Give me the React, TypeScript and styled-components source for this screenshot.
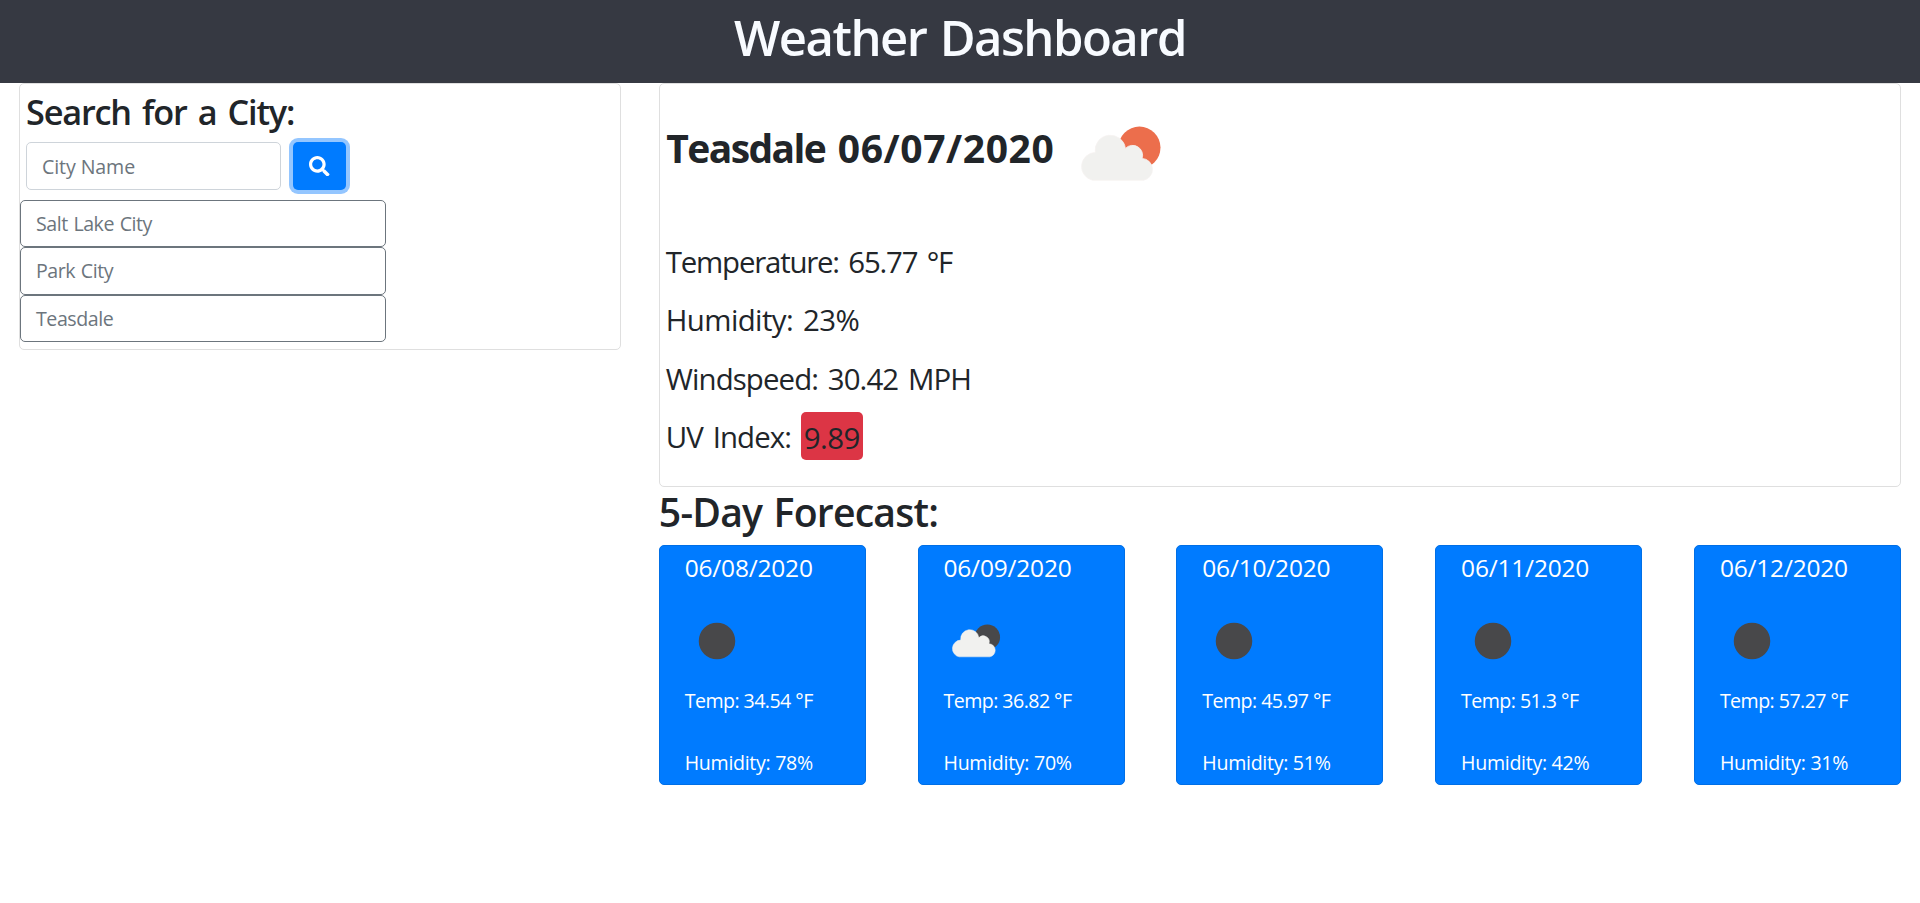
import React from "react";
import styled, { createGlobalStyle } from "styled-components";

const GlobalStyle = createGlobalStyle`
  * { box-sizing: border-box; }
  body { margin: 0; background: #fff; color: #212529; font-family: "Open Sans", "Noto Sans", sans-serif; font-size: 19.6px; }
  h1, h2, h3, p { margin: 0; }
`;

const Header = styled.header`
  height: 83px; padding-top: 7px; background: #363942; color: #f8fbff; text-align: center;
`;
const Title = styled.h1`
  font-size: 49px; line-height: 60px; font-weight: 600; letter-spacing: -1.5px; word-spacing: 2px;
`;
const Layout = styled.main`
  display: grid; grid-template-columns: 602px 1242.2px; column-gap: 37.8px; padding: 0 19px; align-items: start;
`;
const Panel = styled.section<{ $height: number }>`
  height: ${(p) => p.$height}px; border: 1px solid #dfdfdf; border-radius: 5px;
`;
const SearchTitle = styled.h2`
  margin: 7px 0 9px 6px; font-size: 34.3px; line-height: 42px; font-weight: 600;
  letter-spacing: -1.2px; word-spacing: 3.4px; white-space: nowrap;
`;
const SearchForm = styled.form`
  display: flex; gap: 12px; margin: 0 0 9.5px 6px;
`;
const CityInput = styled.input`
  width: 255px; height: 48px; padding: 0 15px; border: 1px solid #ced4da; border-radius: 5px;
  font: inherit; letter-spacing: -0.1px; outline: 0;
  &::placeholder { color: #6c757d; opacity: 1; }
`;
const SearchButton = styled.button`
  display: flex; align-items: center; justify-content: center; width: 53px; height: 48px; padding: 0;
  border: 0; border-radius: 5px; background: #007bff; color: #fff; box-shadow: 0 0 0 4px #94c6ff;
`;
const History = styled.div`
  display: flex; flex-direction: column; width: 366px;
`;
const HistoryButton = styled.button`
  height: 47.5px; padding: 0 15px; border: 1px solid #6c757d; border-radius: 5px; background: #fff;
  color: #6c757d; font: inherit; letter-spacing: -0.45px; word-spacing: 1px; text-align: left;
`;
const CurrentHead = styled.div`
  display: flex; height: 126px; padding-left: 6.5px; align-items: center;
`;
const CityName = styled.h2`
  width: 372px; margin-top: 2px; font-size: 39px; line-height: 48px; font-weight: 700;
  letter-spacing: -1.6px; word-spacing: 4px; white-space: nowrap;
`;
const CityDate = styled.span`
  letter-spacing: 0.6px;
`;
const CurrentIcon = styled.svg`
  width: 106px; height: 106px; margin: 13px 0 0 28px; flex: none;
`;
const Stats = styled.div`
  display: flex; flex-direction: column; gap: 13.4px; padding: 30px 0 0 6px;
`;
const Stat = styled.p<{ $tracking: number }>`
  display: flex; align-items: center; height: 45px; font-size: 29.4px; line-height: 45px; font-weight: 400;
  letter-spacing: ${(p) => p.$tracking}px; word-spacing: 3px; white-space: pre;
`;
const UvBadge = styled.span`
  width: 62px; height: 48px; margin-bottom: 4px; border-radius: 5px; background: #dc3545;
  line-height: 52px; letter-spacing: -0.5px; text-align: center;
`;
const ForecastTitle = styled.h2`
  padding-top: 1px; margin-bottom: 9px; font-size: 39.2px; line-height: 48px; font-weight: 600;
  letter-spacing: -0.8px; word-spacing: 2px;
`;
const Forecast = styled.div`
  display: flex; justify-content: space-between;
`;
const DayCard = styled.article`
  width: 207px; height: 240px; padding: 7px 0 0 24.9px; border: 1px solid #006fe6; border-radius: 5px;
  background: #007bff; color: #fff; white-space: nowrap;
`;
const DayDate = styled.h3`
  font-size: 24.5px; line-height: 30px; font-weight: 400; letter-spacing: -0.2px;
`;
const DayIcon = styled.svg`
  display: block; width: 64px; height: 64px; margin: 25.5px 0 13.5px 0;
`;
const DayText = styled.p<{ $tracking: number }>`
  line-height: 30px; letter-spacing: ${(p) => p.$tracking}px;
  & + & { margin-top: 32px; }
`;

const ICON_BOX = "-3.5 -17.5 105.8 105.8";

const FewClouds = ({ sun, halo }: { sun: string; halo: string }) => (
  <>
    <circle cx="69.8" cy="29" r="21" fill={sun} />
    <path
      fill="#f1f1ef"
      stroke={halo}
      strokeWidth="0.8"
      d="M23.2 61.6 A14 14 0 0 1 25.7 33.9 A15 15 0 1 1 55.8 29.8 A10 10 0 0 1 72.5 39.8 A11 11 0 0 1 73.8 61.6 Z"
    />
  </>
);

const days = [
  { date: "06/08/2020", temp: "34.54", humidity: 78, cloudy: false },
  { date: "06/09/2020", temp: "36.82", humidity: 70, cloudy: true },
  { date: "06/10/2020", temp: "45.97", humidity: 51, cloudy: false },
  { date: "06/11/2020", temp: "51.3", humidity: 42, cloudy: false },
  { date: "06/12/2020", temp: "57.27", humidity: 31, cloudy: false },
];

export default function App() {
  return (
    <>
      <GlobalStyle />
      <Header><Title>Weather Dashboard</Title></Header>
      <Layout>
        <Panel $height={267}>
          <SearchTitle>Search for a City:</SearchTitle>
          <SearchForm>
            <CityInput placeholder="City Name" />
            <SearchButton type="button" aria-label="Search">
              <svg width="20.5" height="20.5" viewBox="0 0 512 512" fill="currentColor">
                <path d="M505 442.7L405.3 343c-4.5-4.5-10.6-7-17-7H372c27.6-35.3 44-79.7 44-128C416 93.1 322.9 0 208 0S0 93.1 0 208s93.1 208 208 208c48.3 0 92.7-16.4 128-44v16.3c0 6.4 2.5 12.5 7 17l99.7 99.7c9.4 9.4 24.6 9.4 33.9 0l28.3-28.3c9.4-9.4 9.4-24.6.1-34zM208 336c-70.7 0-128-57.2-128-128 0-70.7 57.2-128 128-128 70.7 0 128 57.2 128 128 0 70.7-57.2 128-128 128z" />
              </svg>
            </SearchButton>
          </SearchForm>
          <History>
            {["Salt Lake City", "Park City", "Teasdale"].map((c) => (
              <HistoryButton key={c}>{c}</HistoryButton>
            ))}
          </History>
        </Panel>
        <div>
          <Panel $height={404}>
            <CurrentHead>
              <CityName>Teasdale <CityDate>06/07/2020</CityDate></CityName>
              <CurrentIcon viewBox={ICON_BOX}><FewClouds sun="#ec6e4c" halo="#f6f3f1" /></CurrentIcon>
            </CurrentHead>
            <Stats>
              <Stat $tracking={-1.2}>Temperature: 65.77 °F</Stat>
              <Stat $tracking={-0.6}>Humidity: 23%</Stat>
              <Stat $tracking={-0.9}>Windspeed: 30.42 MPH</Stat>
              <Stat $tracking={-0.9}>UV Index: <UvBadge>9.89</UvBadge></Stat>
            </Stats>
          </Panel>
          <ForecastTitle>5-Day Forecast:</ForecastTitle>
          <Forecast>
            {days.map((d) => (
              <DayCard key={d.date}>
                <DayDate>{d.date}</DayDate>
                <DayIcon viewBox={ICON_BOX}>
                  {d.cloudy ? (
                    <FewClouds sun="#48484a" halo="#f1f1ef" />
                  ) : (
                    <circle cx="49.4" cy="35.4" r="30.2" fill="#48484a" />
                  )}
                </DayIcon>
                <DayText $tracking={-0.55}>Temp: {d.temp} °F</DayText>
                <DayText $tracking={-0.3}>Humidity: {d.humidity}%</DayText>
              </DayCard>
            ))}
          </Forecast>
        </div>
      </Layout>
    </>
  );
}
